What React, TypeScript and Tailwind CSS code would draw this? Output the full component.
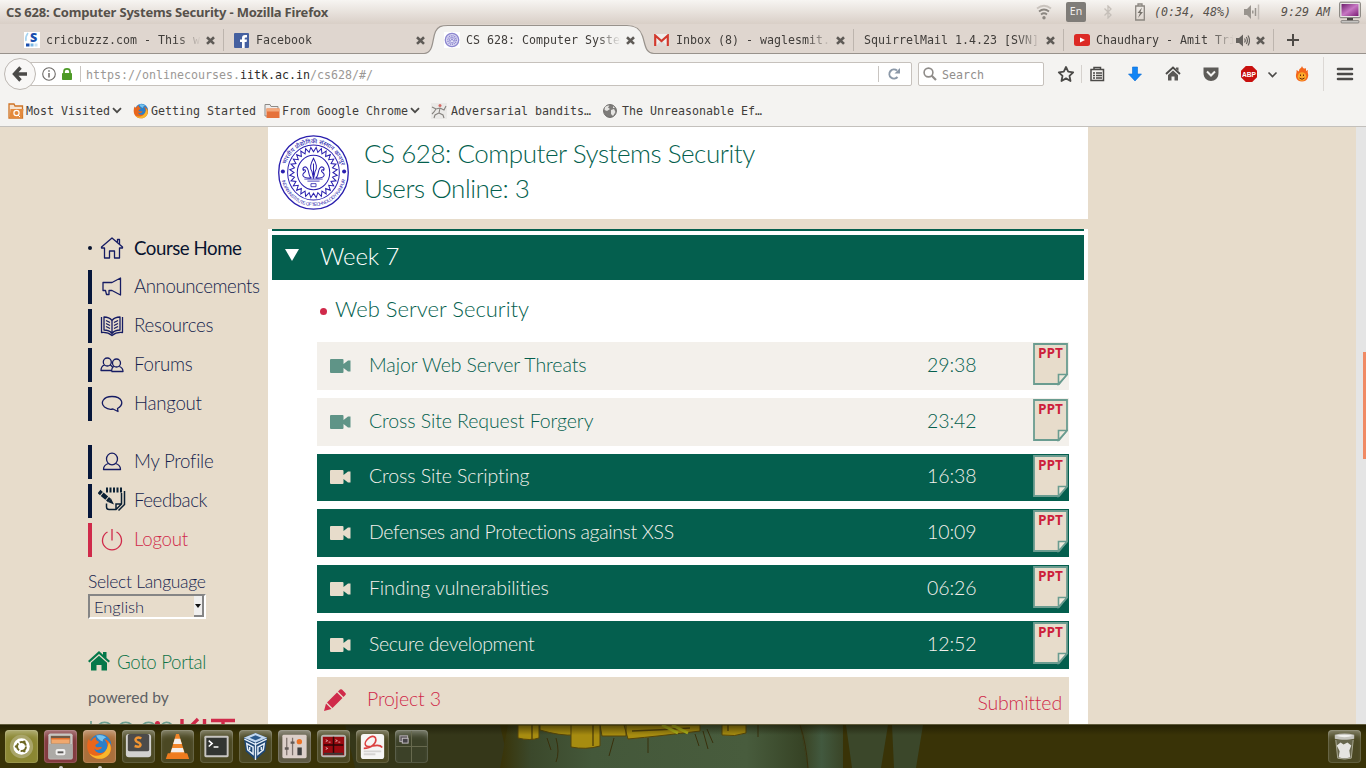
import React from "react";

const MONO = "font-['DejaVu_Sans_Mono',monospace] text-[11.63px]";
const LATO = "font-['Lato',sans-serif] font-light";

function Close() {
  return (
    <svg width="9" height="9" viewBox="0 0 9 9" className="shrink-0">
      <path d="M1 1.3 L8 7.9 M8 1.3 L1 7.9" stroke="#5f5b57" strokeWidth="2.6" fill="none" />
    </svg>
  );
}

const gearPath =
  Array.from({ length: 56 }, (_, i) => {
    const a = (i / 56) * Math.PI * 2;
    const r = i % 2 ? 23.5 : 19.2;
    return `${i ? "L" : "M"}${(35 + r * Math.cos(a)).toFixed(2)} ${(37 + r * 1.06 * Math.sin(a)).toFixed(2)}`;
  }).join(" ") + " Z";

function Seal({ className, color = "#2a1fae" }: { className: string; color?: string }) {
  return (
    <svg className={className} viewBox="0 0 70 74" preserveAspectRatio="none" fill="none" stroke={color}>
      <ellipse cx="35" cy="37" rx="34.3" ry="36.2" strokeWidth="1.3" />
      <ellipse cx="35" cy="37" rx="25.5" ry="27.200" strokeWidth="1" />
      <path d={gearPath} strokeWidth="1" />
      <ellipse cx="35" cy="37" rx="16" ry="17" strokeWidth="1" />
      <path d="M35 23 C32 29 31 32 33.5 36 L35 43 L36.5 36 C39 32 38 29 35 23 Z M35 28 V40" strokeWidth="1" />
      <path d="M33 42 C30 42 31 36 29 33 C27 30 23.500 32 25 35 C27 33 28 36 26 37 C23 39 24 43 33 42.500 M37 42 C40 42 39 36 41 33 C43 30 46.500 32 45 35 C43 33 42 36 44 37 C47 39 46 43 37 42.500" strokeWidth="1" />
      <path d="M26 43.500 H44 M29 45.500 H41 M32.500 48 H37.500 V51 H32.500 Z" strokeWidth=".8" />
      <circle cx="4.800" cy="36" r="2" fill={color} stroke="none" />
      <circle cx="65.200" cy="36" r="2" fill={color} stroke="none" />
      <path id="sealTop" d="M7.600 30 A28.500 30 0 0 1 62.400 30" stroke="none" />
      <path id="sealBottom" d="M3.300 43 A32.400 34.200 0 0 0 66.700 43" stroke="none" />
      <text fontSize="5.800" fill={color} stroke="none" className="font-['Noto_Sans_Devanagari','Noto_Sans',sans-serif] font-medium">
        <textPath href="#sealTop" startOffset="1" textLength="74">भारतीय प्रौद्योगिकी संस्थान कानपुर</textPath>
      </text>
      <text fontSize="4.600" fill={color} stroke="none" className="font-['Liberation_Sans',sans-serif]">
        <textPath href="#sealBottom" startOffset="2" textLength="87">INDIAN INSTITUTE OF TECHNOLOGY KANPUR</textPath>
      </text>
    </svg>
  );
}

function MiniSeal() {
  return (
    <svg width="16" height="16" viewBox="0 0 16 16" className="shrink-0" fill="none" stroke="#8c86cf">
      <rect width="16" height="16" fill="#fff" stroke="none" />
      <circle cx="8" cy="8" r="6.700" strokeWidth="1.300" fill="#dcdaf3" />
      <circle cx="8" cy="8" r="4.200" strokeWidth="1.600" strokeDasharray="1 .8" />
      <circle cx="8" cy="8" r="2.600" strokeWidth=".8" fill="#ebeafa" />
      <path d="M6.500 9 L8 6.500 L9.500 9" />
    </svg>
  );
}

type TabProps = { icon?: React.ReactNode; title: string; active?: boolean; sound?: boolean; line?: boolean };
function Tab({ icon, title, active, sound, line }: TabProps) {
  return (
    <div className="relative flex h-[30px] w-[210px] shrink-0 items-center pl-[10px] pr-[9px] pb-px pt-[3px]">
      {active && (
        <svg className="absolute -left-[10px] top-0" width="230" height="31" viewBox="0 0 230 31">
          <path d="M0 29.500 C10 29 8 15 11.500 7.500 C14 2.500 17 1.500 24 1.500 H203 C212 1.500 216 5 218.500 12 C221.500 21 221 29 230 29.500 V31 H0 Z" fill="#f4f3f1" />
          <path d="M0 29.500 C10 29 8 15 11.500 7.500 C14 2.500 17 1.500 24 1.500 H203 C212 1.500 216 5 218.500 12 C221.500 21 221 29 230 29.500" fill="none" stroke="#98928c" strokeWidth="1.200" />
        </svg>
      )}
      {icon && <div className="relative mr-[6px] flex w-4 shrink-0">{icon}</div>}
      <div className="relative h-[18px] min-w-0 flex-1 overflow-hidden whitespace-nowrap leading-[18px] text-[#403d3a] [mask-image:linear-gradient(to_right,#000_calc(100%-26px),transparent_calc(100%-2px))]">
        {title}
      </div>
      {sound && (
        <svg width="14" height="13" viewBox="0 0 14 13" className="mr-[3px]" fill="none" stroke="#66625e" strokeWidth="1.200">
          <path d="M0 4 H3 L7 .5 V12.500 L3 9 H0 Z" fill="#66625e" stroke="none" />
          <path d="M8.500 4.500 Q10 6.500 8.500 8.500 M10.300 3 Q12.500 6.500 10.300 10 M12 1.500 Q15 6.500 12 11.500" />
        </svg>
      )}
      <div className="relative ml-[3px] flex"><Close /></div>
      {line && <div className="absolute right-0 top-[5px] h-[22px] w-px bg-[#bdb5ae]" />}
    </div>
  );
}

function TitleBar() {
  return (
    <div className="flex h-6 shrink-0 items-center justify-between bg-gradient-to-b from-[#f7f5f2] to-[#d9cfc7] pl-[6px]">
      <div className="font-['Noto_Sans',sans-serif] text-[13px] font-bold text-[#56514b] leading-6 tracking-[-0.19px] whitespace-nowrap">CS 628: Computer Systems Security - Mozilla Firefox</div>
      <div className={`${MONO} flex items-center text-[#56514b]`}>
        <svg width="16" height="16" viewBox="0 0 16 16" fill="none" stroke="#8b8680" strokeWidth="1.800" className="mr-[14px]">
          <path d="M1 4.500 Q8 -1 15 4.500" stroke="#c9c3bd" /><path d="M3 7.500 Q8 3.500 13 7.500" /><path d="M5 10.500 Q8 8 11 10.500" />
          <circle cx="8" cy="13.800" r="1.700" fill="#8b8680" stroke="none" />
        </svg>
        <div className="mr-[18px] flex h-5 w-5 items-center justify-center rounded-[2px] bg-[#7f7c78] font-['Noto_Sans',sans-serif] text-[10.500px] text-[#f2efec]">En</div>
        <svg width="8" height="14" viewBox="0 0 8 14" fill="none" stroke="#c5bfb9" strokeWidth="1.300" className="mr-[23px]">
          <path d="M.5 3.500 L7 10 L4 13 V1 L7 4 L.5 10.500" />
        </svg>
        <svg width="10" height="18" viewBox="0 0 10 18" className="mr-[9px]">
          <path d="M3 3 V1 H7 V3 M.7 3 H9.300 V17 H.7 Z" fill="none" stroke="#8b8680" strokeWidth="1.300" />
          <path d="M7 4.500 L2.500 10 H5 L3 15 L8 9 H5.500 Z" fill="#77726c" />
        </svg>
        <span className="mr-[13px] pt-px italic whitespace-pre">(0:34, 48%)</span>
        <svg width="16" height="16" viewBox="0 0 16 16" className="mr-[21px]" stroke="#99948e" fill="none" strokeWidth="1.500">
          <path d="M0 5 H3 L7 1 V15 L3 11 H0 Z" fill="#99948e" stroke="none" />
          <path d="M8.800 6.500 V9.500 M11.500 4 V12" /><path d="M14.500 .5 V15.500" stroke="#c0bab4" />
        </svg>
        <span className="mr-[9px] pt-px italic whitespace-pre">9:29 AM</span>
        <svg width="22" height="23" viewBox="0 0 22 23" className="mr-[5px]">
          <defs><linearGradient id="scr" x1="0" y1="0" x2="1" y2="1"><stop stopColor="#6d1e6c" /><stop offset=".5" stopColor="#c777c3" /><stop offset="1" stopColor="#7b1c74" /></linearGradient></defs>
          <rect x=".7" y="1.200" width="20.600" height="15.500" rx="1" fill="#e9e7e5" stroke="#77746f" />
          <rect x="2.500" y="3" width="17" height="12" fill="url(#scr)" />
          <path d="M8 17 H14 V19.500 H8 Z" fill="#494744" /><rect x="2" y="19.500" width="18" height="2.500" rx="1" fill="#c5c3c0" stroke="#65625f" strokeWidth=".6" />
        </svg>
      </div>
    </div>
  );
}

function TabStrip() {
  return (
    <div className={`${MONO} flex h-[30px] shrink-0 bg-[#dfd6cf] pl-[14px] shadow-[inset_0_-1px_#98928c]`}>
      <Tab line title="cricbuzzz.com - This website" icon={
        <svg width="16" height="16" viewBox="0 0 16 16"><rect width="16" height="16" fill="#fff" /><path d="M4 1 Q1 5 2 9" stroke="#a6d3f0" fill="none" strokeWidth="1.500" /><text x="6" y="10" fontSize="12.500" fill="#1b4fae" className="font-['Noto_Sans',sans-serif] font-black">S</text><rect x="2" y="11.500" width="3.500" height="3" fill="#1b4fae" /><rect x="6.500" y="11.500" width="3" height="3" fill="#79b6e2" /><rect x="10.500" y="11.500" width="3" height="3" fill="#c7e1f2" /></svg>} />
      <Tab title="Facebook" icon={
        <svg width="15" height="15" viewBox="0 0 15 15"><rect width="15" height="15" rx="1" fill="#4560a0" /><path d="M8 15 V9 H6 V6.500 H8 V5 Q8 2 11 2 H13 V4.500 H11.800 Q10.700 4.500 10.700 5.500 V6.500 H13 L12.600 9 H10.700 V15 Z" fill="#fff" /></svg>} />
      <Tab active title="CS 628: Computer Systems" icon={<MiniSeal />} />
      <Tab line title="Inbox (8) - waglesmit.m" icon={
        <svg width="15" height="12" viewBox="0 0 15 12"><rect width="15" height="12" rx="1" fill="#efeeec" /><path d="M2 12 L7.500 6 L13 12" fill="#dcdad8" /><path d="M1.200 12 V1.500 L7.500 7 L13.800 1.500 V12" stroke="#d23a2e" strokeWidth="2.200" fill="none" /></svg>} />
      <Tab line title="SquirrelMail 1.4.23 [SVN]-" />
      <Tab line sound title="Chaudhary - Amit Trivedi" icon={
        <svg width="16" height="12" viewBox="0 0 16 12"><rect width="16" height="12" rx="2.500" fill="#dc2a25" /><path d="M6 3.500 L11 6 L6 8.500 Z" fill="#fff" /></svg>} />
      <svg width="14" height="14" viewBox="0 0 14 14" className="ml-[12px] mt-[9px]"><path d="M7 1 V13 M1 7 H13" stroke="#4e4a46" strokeWidth="2" /></svg>
    </div>
  );
}

function NavBar() {
  return (
    <div className={`${MONO} flex h-[40px] shrink-0 items-center bg-[#f4f3f1] pl-1`}>
      <div className="z-10 flex size-8 shrink-0 items-center justify-center rounded-full border border-[#bdb8b3] bg-[#f8f7f6]">
        <svg width="16" height="16" viewBox="0 0 16 16" fill="none" stroke="#4b4a48" strokeWidth="3.400"><path d="M15 8 H4 M8.500 1.500 L2.500 8 L8.500 14.500" /></svg>
      </div>
      <div className="-ml-[10px] flex h-6 w-[886px] shrink-0 items-center rounded-r-[2px] border border-[#c6c1bc] bg-white pl-[15px]">
        <svg width="14" height="14" viewBox="0 0 14 14" fill="none" stroke="#6d6a67"><circle cx="7" cy="7" r="6.300" strokeWidth="1.100" /><path d="M7 6 V10.500 M7 3.200 V4.800" strokeWidth="1.500" /></svg>
        <svg width="10" height="12" viewBox="0 0 10 12" className="ml-[6px]"><rect y="5" width="10" height="7" rx=".8" fill="#4d9a26" /><path d="M2 6 V3.500 Q2 .9 5 .9 Q8 .9 8 3.500 V6" fill="none" stroke="#4d9a26" strokeWidth="1.700" /></svg>
        <div className="ml-[8px] h-4 w-px bg-[#c9c5c1]" />
        <div className="ml-[5px] flex-1 pt-[3px] text-[#9b9895]">https://onlinecourses.<span className="text-[#2c2b2a]">iitk.ac.in</span>/cs628/#/</div>
        <div className="mr-[9px] h-4 w-px bg-[#c9c5c1]" />
        <svg width="12" height="12" viewBox="0 0 12 12" fill="none" stroke="#8b98a8" strokeWidth="2" className="mr-[11px]"><path d="M9.500 9 A4.600 4.600 0 1 1 9 2.500" /><path d="M12 0 V5.500 H6.500 Z" fill="#8b98a8" stroke="none" /></svg>
      </div>
      <div className="ml-[6px] flex h-6 w-[126px] shrink-0 items-center rounded-[2px] border border-[#c6c1bc] bg-white pl-1 text-[#918e8b]">
        <svg width="14" height="14" viewBox="0 0 14 14" fill="none" stroke="#8f8c89" className="mr-[5px]"><circle cx="5.500" cy="5.500" r="4.400" strokeWidth="1.600" /><path d="M8.500 8.500 L13 13" strokeWidth="2.200" /></svg>
        <span className="pt-[3px]">Search</span>
      </div>
      <svg width="322" height="40" viewBox="1044 54 322 40" className="shrink-0" fill="none" stroke="#4b4a48">
        <path d="M1066 67 L1068.200 71.700 L1073.200 72.300 L1069.500 75.800 L1070.500 81 L1066 78.400 L1061.500 81 L1062.500 75.800 L1058.800 72.300 L1063.800 71.700 Z" strokeWidth="1.800" strokeLinejoin="round" />
        <path d="M1081.500 65 V83" stroke="#d5d1cd" />
        <path d="M1091 69.500 H1103.500 V80.500 H1091 Z M1094 69 V67.500 H1100.500 V69 M1093 73 H1095 M1096 73 H1102 M1093 75.500 H1095 M1096 75.500 H1102 M1093 78 H1095 M1096 78 H1102" strokeWidth="1.500" />
        <path d="M1132.500 67 H1137.500 V74 H1141.500 L1135 81 L1128.500 74 H1132.500 Z" fill="#1285f5" stroke="#0a6cd4" strokeWidth=".6" />
        <path d="M1166 74 L1173 67.500 L1180 74" strokeWidth="1.900" /><path d="M1168 75 L1173 70.500 L1178 75 V80.500 H1174.500 V76.500 H1171.500 V80.500 H1168 Z M1176 67.500 H1178.500 V71 L1176 69 Z" fill="#5a5856" stroke="none" />
        <path d="M1203.500 67.500 H1218.500 V73 C1218.500 83.500 1203.500 83.500 1203.500 73 Z" fill="#5d5b58" stroke="none" /><path d="M1207 71.500 L1211 75.500 L1215 71.500" stroke="#f4f3f1" strokeWidth="2" />
        <path d="M1245.800 66 H1252.200 L1257 70.800 V77.200 L1252.200 82 H1245.800 L1241 77.200 V70.800 Z" fill="#c8100e" stroke="none" />
        <text x="1242" y="77" fontSize="8" fill="#fff" stroke="none" textLength="14" lengthAdjust="spacingAndGlyphs" className="font-['Liberation_Sans',sans-serif] font-bold">ABP</text>
        <path d="M1268.500 72.500 L1272.500 76.500 L1276.500 72.500" strokeWidth="1.600" />
        <path d="M1302 66 C1303 69 1305 69 1306 68 L1306 71 L1308 70 C1307 73 1309 74 1308 77 C1307 83 1297 83 1296 77 C1295.500 74 1297 73 1296.500 70 L1299 71.500 C1299 68 1301 69 1302 66 Z" fill="#f4661b" stroke="none" />
        <circle cx="1302" cy="76.500" r="4.300" fill="#fba92a" stroke="none" /><path d="M1300.500 74.500 V76 M1303.500 74.500 V76 M1299.500 78 Q1302 80.500 1304.500 78" strokeWidth="1" stroke="#6b2a08" />
        <path d="M1323.500 57 V91" stroke="#dcd8d5" />
        <path d="M1338 69 H1352 M1338 74 H1352 M1338 79 H1352" strokeWidth="2.600" strokeLinecap="round" />
      </svg>
    </div>
  );
}

function Chevron() {
  return <svg width="10" height="7" viewBox="0 0 10 7" className="ml-[2px] shrink-0"><path d="M1 1.200 L5 5.200 L9 1.200" fill="none" stroke="#4b4a48" strokeWidth="1.800" /></svg>;
}

function Bookmarks() {
  return (
    <div className={`${MONO} flex h-[33px] shrink-0 items-center whitespace-nowrap border-b border-[#c3c0bc] bg-[#f4f3f1] pl-2 pt-px text-[#403d3a]`}>
      <svg width="16" height="16" viewBox="0 0 16 16" className="mr-[2px]"><path d="M1 15 V1 H6 L7 3 H14.500 V15 Z" fill="#f6e3d0" stroke="#cf7426" strokeWidth="1.300" /><path d="M2.500 6 H15.500 L14 15 H1.500 Z" fill="#e48a3d" /><circle cx="8.500" cy="10" r="2.600" fill="none" stroke="#fff" strokeWidth="1.200" /><path d="M10 12 L12 14" stroke="#fff" /></svg>
      <span className="pt-[3px]">Most Visited</span><Chevron />
      <Firefox className="ml-[11px] mr-[2px] size-4" />
      <span className="pt-[3px]">Getting Started</span>
      <svg width="16" height="16" viewBox="0 0 16 16" className="ml-[8px] mr-[2px]"><path d="M1 13 V1.500 H6 L7 3.500 H14 V13 Z" fill="#eeeceb" stroke="#8d8a87" /><path d="M2.500 5.500 H15.500 V15 H2.500 Z" fill="#e5713a" /><path d="M2.500 5.500 H15.500 V8.500 H2.500 Z" fill="#f3a97c" /></svg>
      <span className="pt-[3px]">From Google Chrome</span><Chevron />
      <svg width="16" height="16" viewBox="0 0 16 16" className="ml-[11px] mr-[4px]" stroke="#85827e" strokeWidth="1.100" fill="none"><rect width="16" height="16" fill="#eae9e7" stroke="none" /><path d="M1 4 L5 6 L9 5 L13 7 L15 3 M9 5 L8 10 L4 12 L3 15 M8 10 L12 12 L13 15 M5 6 L3 9 L1 11" /><circle cx="9" cy="2.500" r="1.500" fill="#d46a64" stroke="none" /></svg>
      <span className="pt-[3px]">Adversarial bandits…</span>
      <svg width="14" height="14" viewBox="0 0 14 14" className="ml-[12px] mr-[5px]"><circle cx="7" cy="7" r="6.400" fill="#7e7c7a" stroke="#6a6866" /><path d="M2 3 Q4 1 6.500 1.500 L5 3.500 L7 5 L4 7 L1.500 6 Z M8 6 L11 5 L12.500 8 L10 12 L8 10 Z M10 2 L12 4 H10 Z" fill="#e5e4e2" /></svg>
      <span className="pt-[3px]">The Unreasonable Ef…</span>
    </div>
  );
}

function Firefox({ className }: { className: string }) {
  return (
    <svg className={className} viewBox="0 0 32 32">
      <circle cx="17" cy="14.500" r="13" fill="#2a7fc9" />
      <path d="M12 3 Q18 1 24 5 Q19 7 20 10 Q15 9 12 3" fill="#75c2ee" />
      <path d="M3 7 C4 9 5 9 7 9 C8 6 10 5 12 5 C11 7 12 9 15 10 C16 13 12 12 11 15 C12 18 16 16 19 17 C17 21 11 21 10 18 C11 26 23 25 25 18 C26 13 24 9 21 7 C30 9 32 18 28 24 C23 32 11 33 5 26 C0 20 1 12 3 7 Z" fill="#e9661c" />
      <path d="M27 11 C32 18 29 27 21 30 C14 32 7 29 4 24 C12 30 24 28 27 11 Z" fill="#f8b62c" />
    </svg>
  );
}

const navIcon: Record<string, React.ReactNode> = {
  home: <path d="M1.500 11 L12 2 L22.500 11 V12 H19.500 V22 H14.500 V15 H9.500 V22 H4.500 V12 H1.500 Z M17.500 6 V3.500 H19.500 V8" />,
  horn: <path d="M3 7.500 H12 L20.500 3 V20 L12 15.500 H9 V19.500 H6.500 L5.500 15.500 H3 Z" />,
  book: <path d="M1.500 3 V18.500 C6 18 9 19 12 21.500 C15 19 18 18 22.500 18.500 V3 M4 3 V16 C8 16 10 17 12 19.500 C14 17 16 16 20 16 V3 C16 3 14 4 12 6.500 C10 4 8 3 4 3 Z M12 6.500 V19 M6 6.500 L10 8.500 M6 9.500 L10 11.500 M6 12.500 L10 14.500 M18 6.500 L14 8.500 M18 9.500 L14 11.500 M18 12.500 L14 14.500" />,
  users: <path d="M3.300 9 A4 4 0 1 1 11.300 9 A4 4 0 1 1 3.300 9 M12.500 10 A4 4 0 1 1 20.500 10 A4 4 0 1 1 12.500 10 M4.500 12 C1.500 13 1 15 1 17.500 H11.500 M11.500 18.500 H23 C23 16 22 14.500 19.500 13.500 M13.500 13.500 C12 14.500 11.500 16 11.500 18.500 M10.500 12 L12.500 14" />,
  chat: <path d="M17.500 16.500 C25 12 22 4.500 12 4.500 C3 4.500 0 11 4.500 15 C7 17 11 17.500 13 17 L18 19.500 Z" />,
  user: <path d="M6.500 9 A5.500 5.800 0 1 1 17.500 9 A5.500 5.800 0 1 1 6.500 9 M8.500 13.500 C5 14.500 3.500 16.500 3.500 19.500 H20.500 C20.500 16.500 19 14.500 15.500 13.500" />,
  power: <path d="M7.500 4 A9.500 9.500 0 1 0 16.500 4 M12 1 V12.500" />,
};

function FeedbackIcon() {
  return (
    <svg width="28" height="26" viewBox="0 0 28 26" className="-ml-[2px] mr-[8px] -mt-1 shrink-0" fill="none" stroke="#0b2034">
      <path d="M9 1.500 V6.500 M12.500 1.500 V6.500 M16 1.500 V6.500 M19.500 1.500 V6.500 M23 1.500 V6.500" strokeWidth="2" />
      <path d="M1 5.500 L11.500 14.500" strokeWidth="4.400" strokeDasharray="3.200 1 6 1 8" /><path d="M10 16 L13 12.500 L16 18.500 Z" fill="#0b2034" stroke="none" />
      <path d="M8.500 17.500 V21 Q8.500 23.500 11 23.500 H18 L23.500 18 V7 M18 23 V18 H23.500 M26.500 5 V18.500 L20.500 24.500" strokeWidth="1.500" />
    </svg>
  );
}

type ItemProps = { label: string; icon: string; kind?: "active" | "logout"; tight?: boolean };
function NavItem({ label, icon, kind, tight }: ItemProps) {
  const red = kind === "logout";
  const stroke = red ? "#d02a4a" : "#161c63";
  return (
    <div className="flex h-[34px] items-center whitespace-nowrap">
      {kind === "active" ? (
        <div className="flex w-[12px] shrink-0"><div className="size-1 rounded-full bg-[#08132f]" /></div>
      ) : (
        <div className={red ? "mr-2 h-[34px] w-1 shrink-0 bg-[#d02a4a]" : "mr-2 h-[34px] w-1 shrink-0 bg-[#06163a]"} />
      )}
      {icon === "feedback" ? <FeedbackIcon /> : (
        <svg width="24" height="24" viewBox="0 0 24 24" fill="none" stroke={stroke} strokeWidth="1.300" strokeLinejoin="round" className="mr-[10px] shrink-0">{navIcon[icon]}</svg>
      )}
      <span className={kind === "active" ? "font-normal tracking-[-0.45px] text-[#08132f]" : red ? "pb-[2px] tracking-[-0.25px] text-[#d02a4a]" : tight ? "pb-[2px] tracking-[-0.43px] text-[#161f4e]" : "pb-[2px] tracking-[-0.25px] text-[#161f4e]"}>{label}</span>
    </div>
  );
}

function Sidebar() {
  return (
    <div className={`${LATO} flex w-[268px] shrink-0 flex-col pl-[88px] pt-[104px] text-[18.670px] leading-[24px]`}>
      <div className="flex flex-col gap-[5px]">
        <NavItem label="Course Home" icon="home" kind="active" />
        <NavItem label="Announcements" icon="horn" tight />
        <NavItem label="Resources" icon="book" />
        <NavItem label="Forums" icon="users" />
        <NavItem label="Hangout" icon="chat" />
      </div>
      <div className="mt-[24px] flex flex-col gap-[5px]">
        <NavItem label="My Profile" icon="user" />
        <NavItem label="Feedback" icon="feedback" tight />
        <NavItem label="Logout" icon="power" kind="logout" />
      </div>
      <div className="mt-[12px] h-[25px] text-[17.500px] leading-[25px] tracking-[-0.32px] text-[#161f4e]">Select Language</div>
      <div className="flex h-[25px] w-[118px] items-stretch border-2 border-b-white border-l-[#858585] border-r-white border-t-[#858585] pl-1 text-[16.500px] leading-[22px] text-[#161f4e]">
        <span className="flex-1">English</span>
        <div className="flex w-[10px] items-center justify-center border-b-2 border-r-2 border-[#858585] bg-[#f0efee]">
          <svg width="6" height="4" viewBox="0 0 6 4"><path d="M0 0 H6 L3 4 Z" fill="#111" /></svg>
        </div>
      </div>
      <div className="mt-[31px] flex h-6 items-center text-[18.670px] tracking-[-0.3px] text-[#0d7347]">
        <svg width="22" height="20" viewBox="0 0 22 20" className="mb-[2px] mr-[7px]" fill="#04784a"><path d="M0 10 L11 0 L15 3.700 V1 H18.500 V7 L22 10 L20.500 11.500 L11 3 L1.500 11.500 Z M3 11.800 L11 4.700 L19 11.800 V19.500 H13.500 V14 H8.500 V19.500 H3 Z" /></svg>
        Goto Portal
      </div>
      <div className="mt-[11px] h-6 text-[15.600px] font-normal text-[#5d6064]">powered by</div>
      <svg width="150" height="14" viewBox="0 0 150 14" className="mt-[8px] shrink-0" fill="none" stroke="#6fa093" strokeWidth="1.700">
        <path d="M3 4 V14 M8 14 C9 2.500 24 2.500 26 14 M29 14 C30 2.500 45 2.500 47 14 M52 14 C53 2.500 68 2.500 70 14 M72 14 C73 3 83 2 87 14" /><circle cx="69.500" cy="6.500" r="2.500" fill="#d02a4a" stroke="none" /><path d="M94 2 V14 M110 2 L98 14 M116.500 2 V14" stroke="#d02a4a" strokeWidth="3.400" /><path d="M123 3.500 H147 M135 3 V14" stroke="#d02a4a" strokeWidth="3.400" />
      </svg>
    </div>
  );
}

function Ppt() {
  return (
    <svg width="35" height="43" viewBox="0 0 35 43" className="mr-[1px] mt-[1px] self-start">
      <path d="M1 1 H34 V31.500 L26 41 H1 Z" fill="#e7dccb" stroke="#6a9c90" strokeWidth="1.800" />
      <path d="M25.500 41 V31.500 H34 Z" fill="#f0e8db" stroke="#6a9c90" strokeWidth="1.600" />
      <text x="5" y="15.300" fontSize="14" fill="#cd1f3c" textLength="25" lengthAdjust="spacingAndGlyphs" className="font-['Open_Sans',sans-serif] font-bold">PPT</text>
    </svg>
  );
}

function Lecture({ title, time, done, tight }: { title: string; time: string; done?: boolean; tight?: boolean }) {
  return (
    <div className={done ? "flex h-[47.800px] items-center bg-[#f3f0eb] pl-[13px] text-[#045f4e]" : "flex h-[47.800px] items-center bg-[#045f4e] pl-[13px] text-[#f3f0eb]"}>
      <svg width="21" height="14" viewBox="0 0 21 14" className="mr-[18px]" fill={done ? "#5f9487" : "#e7dccb"}><path d="M1 0 H12.500 Q13.500 0 13.500 1 V5 L18 1.500 H20.500 V12.500 H18 L13.500 9 V13 Q13.500 14 12.500 14 H1 Q0 14 0 13 V1 Q0 0 1 0 Z" /></svg>
      <span className={tight ? "flex-1 pb-[2.400px] tracking-[-0.36px]" : "flex-1 pb-[2.400px] tracking-[-0.08px]"}>{title}</span>
      <span className="w-[106px] pb-[2.400px] tracking-[-0.1px]">{time}</span>
      <Ppt />
    </div>
  );
}

function Main() {
  return (
    <div className={`${LATO} flex w-[820px] shrink-0 flex-col text-[#045f4e]`}>
      <div className="flex h-[92px] shrink-0 bg-white pl-[10px] pt-[8px]">
        <Seal className="mr-[15px] h-[75px] w-[71px]" />
        <div className="mt-[1px] text-[26px] leading-[35px] tracking-[-0.46px]"><div>CS 628: Computer Systems Security</div><div>Users Online: 3</div></div>
      </div>
      <div className="mt-[10px] flex flex-1 flex-col bg-white px-1">
        <div className="h-[2px] bg-[#045f4e]" />
        <div className="mt-1 flex h-[45px] shrink-0 items-center bg-[#045f4e] pl-[13px] text-[24px] text-white">
          <svg width="14" height="12" viewBox="0 0 14 12" className="mb-[5px] mr-[21px]"><path d="M0 0 H14 L7 12 Z" fill="#fff" /></svg>
          <span className="pb-[3px] tracking-[-0.15px]">Week 7</span>
        </div>
        <div className="flex h-[62px] shrink-0 items-center pl-[48px] text-[22px]">
          <div className="mr-[8px] mt-[1px] size-[7px] rounded-full bg-[#d02a4a]" />
          <span className="pb-[5px]">Web Server Security</span>
        </div>
        <div className="ml-[45px] flex w-[752px] flex-col gap-[8px] text-[19.500px] leading-6">
          <Lecture done title="Major Web Server Threats" time="29:38" />
          <Lecture done title="Cross Site Request Forgery" time="23:42" />
          <Lecture title="Cross Site Scripting" time="16:38" />
          <Lecture title="Defenses and Protections against XSS" time="10:09" tight />
          <Lecture title="Finding vulnerabilities" time="06:26" />
          <Lecture title="Secure development" time="12:52" tight />
          <div className="flex h-[50px] items-center bg-[#e7dccb] pl-[7px] pr-[7px] tracking-[-0.15px] text-[#d02a4a]">
            <svg width="22" height="22" viewBox="0 0 22 22" className="mr-[21px] mb-[4px]" fill="#d02a4a"><path d="M0 22 L2 14.500 L7.500 20 Z M3 13.500 L13 3.500 L18.500 9 L8.500 19 Z M14 2.500 L16 .6 Q17 -.3 18 .6 L21.400 4 Q22.300 5 21.400 6 L19.500 8 Z" /></svg>
            <span className="flex-1 pb-[6px]">Project 3</span><span className="pt-[2px]">Submitted</span>
          </div>
        </div>
      </div>
    </div>
  );
}

const dockTiles: { bg: string; art: React.ReactNode }[] = [
  { bg: "bg-[#8b8732]", art: <><circle cx="17" cy="17" r="12" fill="#a9a56a" /><circle cx="17" cy="17" r="8.500" fill="#fff" /><circle cx="17" cy="17" r="4.600" fill="none" stroke="#6d6824" strokeWidth="2" strokeDasharray="8 1.600" /><circle cx="11.500" cy="17" r="1.400" fill="#6d6824" /><circle cx="19.800" cy="12.300" r="1.400" fill="#6d6824" /><circle cx="19.800" cy="21.700" r="1.400" fill="#6d6824" /></> },
  { bg: "bg-[#833a3e]", art: <><rect x="4.500" y="3.500" width="25" height="27" rx="2" fill="#c9c7c3" /><rect x="7" y="6" width="20" height="8" fill="#6f5a47" /><path d="M7.500 9 H26.500 V14 H7.500 Z" fill="#f0a86e" /><path d="M7.500 9 H26.500" stroke="#e2702c" strokeWidth="1.500" /><rect x="4.500" y="14.500" width="25" height="15" rx="1" fill="#acaaa6" /><rect x="12" y="19.500" width="10" height="6.500" rx="2" fill="#f1f0ef" /><rect x="14" y="22" width="6" height="2" fill="#5b5957" /></> },
  { bg: "bg-[#aa6f3b]", art: null },
  { bg: "bg-[#4b4823]", art: <><rect x="4" y="4" width="26" height="24" rx="3" fill="#d2d1cf" /><rect x="6" y="4" width="22" height="18" rx="2" fill="#4c4b4a" /><path d="M20 8.500 C14 6 12 11 16 12.500 C21 14 20 19 13 16.500" fill="none" stroke="#f19532" strokeWidth="2.500" /></> },
  { bg: "bg-[#4b4823]", art: <><path d="M15.500 4 H18.500 L25 26 H9 Z" fill="#f2862a" /><path d="M14.200 9 H19.800 L21.500 14.500 H12.500 Z M11.500 18.500 H22.500 L24 23 H10 Z" fill="#f3efec" /><path d="M7 24 H27 L29 30 H5 Z" fill="#ee7b1e" /></> },
  { bg: "bg-[#4b4823]", art: <><rect x="4.500" y="6" width="25" height="22" rx="1.500" fill="#c7c5c1" /><rect x="6.500" y="8" width="21" height="18" fill="#323532" /><path d="M9 11 L12.500 14 L9 17 M14 17.500 H19" stroke="#fff" strokeWidth="1.600" fill="none" /></> },
  { bg: "bg-[#4b4823]", art: <><path d="M17 3 L29 8 L27 22 L17 31 L7 22 L5 8 Z" fill="#1d4674" /><path d="M17 3 L29 8 L17 13 L5 8 Z" fill="#c3d8ef" /><path d="M11 8 L17 10.500 L23 8 L17 5.500 Z" fill="#2c5a8c" /><path d="M17 13 V31 M5.500 9.500 L17 15 L28.500 9.500" fill="none" stroke="#e5eef8" strokeWidth="1.400" /><path d="M8 14 L14.500 17.500 V25 L9 20.500 Z M26 14 L19.500 17.500 V25 L25 20.500 Z M11 17.500 V20.500 M23 17.500 V20.500" fill="none" stroke="#e5eef8" strokeWidth="1.500" /></> },
  { bg: "bg-[#5e5a45]", art: <><rect x="4.500" y="5" width="25" height="24" rx="1.500" fill="#dccfc9" /><path d="M9 8 V26 M15 8 V26" stroke="#7d716c" strokeWidth="1.300" /><path d="M7 19 H11 M13 13 H17" stroke="#605956" strokeWidth="2.500" /><circle cx="22" cy="12" r="2.800" fill="#ec7226" /><rect x="20" y="18" width="4.500" height="8" fill="#3e3e3e" /></> },
  { bg: "bg-[#4b4823]", art: <><rect x="4" y="5" width="26" height="23" rx="3" fill="#b8b6b2" /><rect x="6" y="7" width="22" height="19" fill="#9a0a10" /><path d="M17 7 V24 M7 15.500 H27" stroke="#2b0606" strokeWidth="1.500" /><path d="M7 24.500 H27" stroke="#3c3836" strokeWidth="2" /><path d="M9 10 L11 11 L9 12 M19 10 L21 11 L19 12 M9 18 L11 19 L9 20 M12 12.500 H14 M22 12.500 H24" stroke="#f0bcbc" fill="none" strokeWidth=".8" /></> },
  { bg: "bg-[#4b4823]", art: <><rect x="5" y="4" width="24" height="26" rx="3" fill="#f6f5f4" /><path d="M8 22 H26 M8 25 H20" stroke="#d6d4d2" strokeWidth="2" /><path d="M8 19 C16 19 22 13 20 8 C17 3 7 12 10 16 C13 20 23 12 27 18" fill="none" stroke="#db4040" strokeWidth="1.700" /></> },
  { bg: "bg-[#3c4128]", art: <><path d="M17 1 V33 M1 17 H33" stroke="#686a50" /><rect x="5" y="6" width="8" height="6" fill="#5c565b" stroke="#b6b0b4" /><rect x="7.500" y="8.500" width="6" height="5" fill="#454247" stroke="#c5bfc3" /></> },
];

function Tile({ bg, children }: { bg: string; children: React.ReactNode }) {
  return (
    <div className={`${bg} relative flex size-[33px] shrink-0 items-center justify-center rounded-[4px] shadow-[inset_0_7px_7px_-4px_rgba(255,255,255,0.4),inset_0_0_0_1px_rgba(255,255,255,0.12)]`}>{children}</div>
  );
}

function Dock() {
  return (
    <div className="relative flex h-[44px] shrink-0 items-start justify-between border-t border-[#5f5a3a] bg-[#393307] pl-[5px] pr-[5.500px] pt-[5px]">
      <svg className="absolute inset-0" width="1366" height="43" viewBox="0 725 1366 43">
        <defs>
          <linearGradient id="sea" x1="0" x2="1" y1="0" y2="0"><stop stopColor="#393307" /><stop offset=".1" stopColor="#3b482b" /><stop offset=".3" stopColor="#44583a" /><stop offset=".8" stopColor="#485c3d" /><stop offset="1" stopColor="#354123" /></linearGradient>
          <linearGradient id="kelp" x1="0" x2="1" y1="0" y2="0"><stop stopColor="#38401f" /><stop offset=".5" stopColor="#42593f" /><stop offset="1" stopColor="#3a4527" /></linearGradient>
          <linearGradient id="shade" x1="0" x2="0" y1="0" y2="1"><stop stopColor="#141100" stopOpacity=".55" /><stop offset="1" stopColor="#141100" stopOpacity="0" /></linearGradient>
        </defs>
        <path d="M345 725 H500 L510 768 H355 Z" fill="#353719" />
        <path d="M508 725 H800 L808 768 H500 Z" fill="url(#sea)" />
        <path d="M800 725 H843 V768 H808 Z" fill="url(#kelp)" />
        <path d="M846 725 H888 L881 768 H852 Z M892 725 H923 L916 768 H894 Z" fill="#3b472a" />
        <g fill="#a78c10" stroke="#55450a">
          <path d="M540 725 H575 V735 Q560 736 540 730 Z M600 725 H626 V736 H602 Z M624 725 H700 V731 Q660 736 628 739 Z" />
          <path d="M518 725 H539 V738 Q530 741 518 738 Z M571 725 H600 V746 Q586 750 571 747 Z M722 725 H746 V733 Q735 737 722 735 Z" />
          <path d="M532 725 V740 M593 725 V746 M632 731 Q660 730 690 728 M728 725 V731" fill="none" strokeWidth="1.400" />
        </g>
        <path d="M662 725 L678 733 M672 725 L688 733" stroke="#b2b619" strokeWidth="3" />
        <path d="M547 738 L551 750 M556 738 Q560 752 556 762 M614 738 L609 756 M648 738 V753 M695 734 L699 746 M703 731 L708 749 M707 729 L713 743 M758 725 V737 M800 725 Q806 742 808 768" stroke="#39300c" fill="none" />
        <rect y="725" width="1366" height="10" fill="url(#shade)" />
      </svg>
      <div className="relative flex gap-[6px]">
        {dockTiles.map((t, i) => (
          <Tile key={i} bg={t.bg}>
            {t.art ? <svg width="33" height="33" viewBox="0 0 34 34">{t.art}</svg> : <Firefox className="size-[27px]" />}
            {(i === 1 || i === 2) && <div className="absolute -bottom-[6px] left-[15px] h-[3px] w-1 rounded-t-sm bg-[#ccc9c4]" />}
          </Tile>
        ))}
      </div>
      <Tile bg="bg-[#4b4823]">
        <svg width="33" height="33" viewBox="0 0 34 34"><path d="M7 5 Q17 2 27 5 V9 Q17 12 7 9 Z" fill="#c5c4bd" /><path d="M8 6 Q17 4 26 6 Q17 9 8 6" fill="#f0f0ed" /><path d="M8 10 L10 29 Q17 31 24 29 L26 10" fill="#67664c" stroke="#a9a893" /><path d="M9 16 L13 13 L16 15 L20 13 L24 16 L22 21 L23 28 Q17 30 11 28 L12 22 Z" fill="#e5e4e0" /></svg>
      </Tile>
    </div>
  );
}

export default function App() {
  return (
    <div className="flex h-[768px] w-[1366px] flex-col overflow-hidden bg-[#e7dccb]">
      <TitleBar />
      <TabStrip />
      <NavBar />
      <Bookmarks />
      <div className="flex h-[597px] shrink-0 overflow-hidden">
        <Sidebar />
        <Main />
        <div className="flex-1" />
        <div className="w-[10px] bg-[#e5e5e5] pl-[7px] pt-[225px]"><div className="h-[107px] bg-[#f08a64]" /></div>
      </div>
      <Dock />
    </div>
  );
}
